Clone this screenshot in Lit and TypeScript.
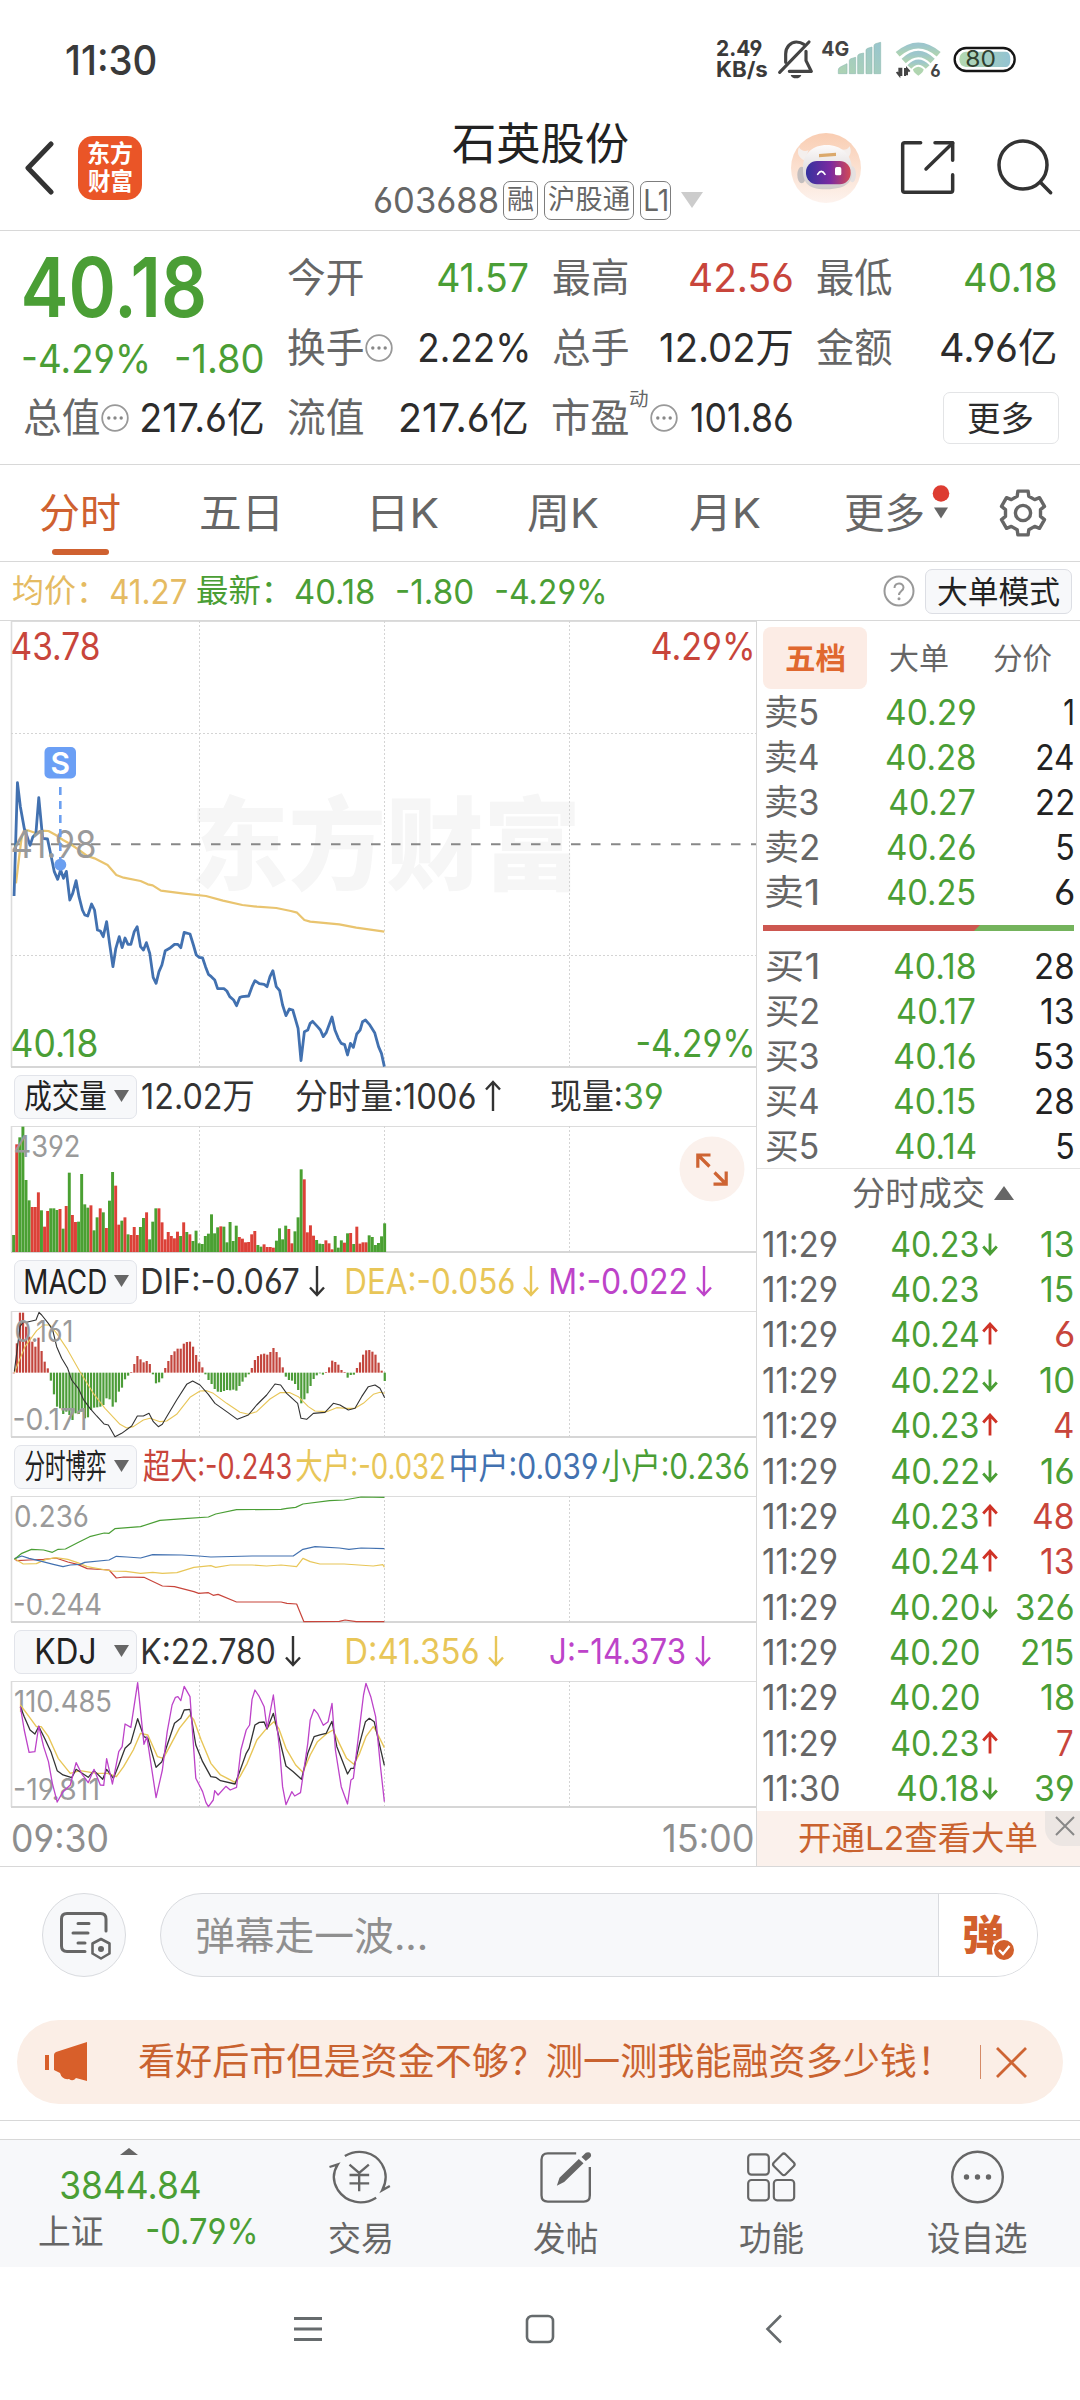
import { LitElement, html, svg, css, nothing } from "lit";
import { customElement, property } from "lit/decorators.js";

const FONT = css`Inter, "Noto Sans CJK SC", sans-serif`;
const GREEN = "#4a9e35";
const RED = "#c8453b";
const YELLOW = "#e8c658";
const BLUE = "#4271b0";
const PURPLE = "#bd43c9";

/** One line of text whose ink is stretched to exactly `w` pixels. */
@customElement("fit-text")
class FitText extends LitElement {
  @property() t = "";
  @property({ type: Number }) w = 10;
  @property({ type: Number }) size = 35;
  @property({ type: Number }) gap = 0;
  @property({ type: Number }) lh = 1.2;
  static styles = css`
    :host { display: block; flex: none; white-space: nowrap; }
    span { display: inline-block; transform-origin: 0 0; white-space: pre; }
  `;
  render() {
    return html`<span>${this.t}</span>`;
  }
  updated() {
    this.style.fontSize = this.size + "px";
    this.style.width = this.w + "px";
    this.style.lineHeight = this.style.height = Math.round(this.size * this.lh) + "px";
    if (this.gap) this.style.marginLeft = this.gap + "px";
    const cs = getComputedStyle(this);
    const ctx = document.createElement("canvas").getContext("2d")!;
    ctx.font = `${cs.fontWeight} ${this.size}px ${cs.fontFamily}`;
    const m = ctx.measureText(this.t);
    const span = this.renderRoot.querySelector("span")!;
    span.style.transform = "none";
    const real = span.getBoundingClientRect().width - m.width;
    const left = -m.actualBoundingBoxLeft;
    const k = this.w / (m.actualBoundingBoxRight - left + real);
    span.style.transform = `translateX(${-left * k}px) scaleX(${k})`;
  }
}

const T = (t: string, w: number, size: number, cls = "", gap = 0, lh = 1.2) =>
  html`<fit-text class=${cls} .t=${t} .w=${w} .size=${size} .gap=${gap} .lh=${lh}></fit-text>`;

const priceLine = "29,858 36,518 42,590 50,655 56,680 62,706 68,680 74,672 80,563 88,685 98,687 105,735 112,785 119,808 125,780 131,805 137,784 144,870 150,850 157,812 163,860 170,900 175,915 181,918 189,882 195,900 201,960 207,963 213,980 220,935 226,1000 233,1070 239,1015 246,980 252,1013 258,984 264,1003 270,1003 277,965 283,950 290,1010 296,1020 302,998 309,1030 316,1102 322,1120 328,1085 334,1065 341,1022 350,1015 360,1003 367,1003 373,1013 380,967 392,972 399,1005 405,1035 411,1042 418,1044 424,1070 430,1093 436,1100 443,1110 449,1136 462,1136 468,1143 474,1160 482,1170 488,1187 495,1162 500,1160 513,1158 520,1130 526,1112 535,1121 545,1123 551,1130 557,1100 563,1082 570,1130 577,1142 583,1185 590,1217 597,1197 604,1200 615,1255 621,1352 628,1265 635,1260 640,1240 645,1234 655,1250 661,1260 667,1280 673,1268 685,1221 691,1260 698,1285 704,1300 711,1304 717,1335 723,1300 729,1312 736,1272 743,1260 748,1235 754,1230 762,1243 773,1268 781,1310 787,1330 793,1370";
const avgLine = "33,820 40,735 45,680 50,660 60,662 75,670 85,662 100,663 115,675 130,690 145,702 165,722 180,738 195,745 222,765 240,795 255,803 290,813 305,823 315,826 332,842 380,851 425,858 460,872 500,885 530,890 570,894 600,903 613,908 628,930 640,935 700,943 735,953 793,965";
const volume = "g525 r253 g232 g200 g360 g421 r441 r441 r397 g451 r500 r453 g445 g445 g450 r447 g506 r438 g338 r465 r486 g485 g342 g433 g443 r436 g511 g472 r445 g457 r504 g422 g336 r377 r494 g482 r472 g523 r525 r501 r525 g501 g474 r457 g538 g485 g445 r445 r487 r538 r516 r528 r535 r515 g528 r487 g516 r523 g543 g512 g550 g552 g528 g521 g463 g520 g502 r499 g500 g547 g486 g543 g497 r531 r536 r547 r546 r523 r513 g555 g560 r553 r561 r561 r563 g542 g505 g538 g497 r507 r550 g514 g472 g328 r358 r517 r496 r527 g540 g551 g552 r541 r550 r568 g528 g563 g541 r548 g520 r519 g552 r500 r551 r547 r547 g526 g531 g555 g549 g529 g490".split(" ");
const hist = [938, 850, 758, 758, 800, 830, 845, 860, 833, 873, 905, 925, 962, 1003, 1040, 1045, 1062, 1055, 1065, 1080, 1060, 1062, 1055, 1075, 1072, 1050, 1043, 1042, 1040, 1035, 1015, 1018, 1040, 1027, 995, 983, 958, 947, 937, 912, 888, 898, 907, 903, 912, 943, 970, 967, 955, 924, 903, 885, 874, 866, 866, 851, 846, 845, 860, 885, 905, 922, 943, 960, 972, 987, 995, 996, 993, 990, 991, 989, 992, 978, 965, 952, 943, 924, 900, 888, 883, 881, 884, 876, 864, 876, 892, 922, 950, 960, 962, 972, 990, 1030, 1018, 1000, 978, 957, 946, 940, 944, 937, 922, 902, 906, 914, 930, 937, 953, 945, 944, 924, 907, 884, 871, 870, 875, 884, 908, 932, 963];
const dif = "43,935 50,880 60,800 70,785 80,787 108,780 117,757 125,765 145,790 158,810 170,860 185,895 203,925 215,960 235,985 250,1018 270,1045 290,1068 312,1092 325,1095 345,1130 365,1120 395,1098 412,1068 430,1068 447,1060 460,1085 475,1100 487,1093 500,1070 530,1020 560,973 578,963 600,975 625,1003 645,1030 680,1055 712,1078 745,1065 770,1035 800,1005 825,972 842,975 860,1000 893,1030 903,1075 920,1078 940,1060 975,1057 1000,1030 1020,1035 1045,1050 1065,1045 1085,1010 1105,980 1125,975 1140,985 1154,1013";
const dea = "43,938 75,860 110,812 130,795 150,795 170,820 200,865 240,935 280,1000 315,1045 360,1093 380,1104 400,1100 430,1080 450,1075 480,1085 500,1083 530,1063 570,1012 600,993 620,992 640,1000 680,1030 720,1057 745,1063 770,1055 810,1017 840,998 870,998 895,1010 925,1040 945,1053 980,1055 1010,1043 1040,1045 1065,1045 1090,1030 1120,1003 1140,997 1154,1000";
const flowSmall = "30,388 45,370 65,358 90,360 108,367 120,358 135,357 160,338 185,320 215,309 225,310 237,296 290,290 330,271 380,266 430,261 445,252 488,239 580,238 592,235 610,232 625,222 680,212 710,210 745,201 793,202";
const flowMid = "30,386 45,378 60,385 80,392 110,403 130,410 145,405 165,403 175,397 225,390 240,379 262,381 290,384 315,374 375,375 410,378 435,381 520,378 605,378 625,358 650,350 700,354 720,358 745,354 793,356";
const flowBig = "30,386 48,402 75,401 95,388 115,383 140,388 160,398 180,410 230,423 260,424 290,430 315,427 335,430 365,428 400,412 435,407 445,412 475,405 520,405 550,408 580,405 612,410 625,385 640,395 660,402 710,402 770,408 790,404 793,412";
const flowHuge = "30,386 35,392 60,390 90,388 115,384 140,396 160,403 180,416 225,420 240,444 255,441 297,442 335,468 360,470 400,485 410,490 430,488 440,496 450,493 488,516 580,516 592,520 612,522 627,575 700,574 712,570 735,575 793,575";
const kdjJ = "42,830 50,900 60,967 72,965 80,888 90,950 100,995 108,1060 118,1116 130,1085 145,1065 157,998 168,1030 182,1058 194,1018 207,1065 214,1066 220,986 232,1062 245,965 252,950 258,882 270,892 284,758 297,943 303,920 322,1103 335,1020 345,905 355,825 362,802 367,800 373,812 380,769 392,800 404,1045 418,1085 425,1118 430,1130 440,1110 443,1082 450,1095 466,1069 475,1080 488,1072 497,960 508,900 515,885 520,808 526,780 535,800 545,830 551,895 564,795 577,960 583,1070 590,1124 602,1085 608,1098 620,1088 635,940 640,870 648,838 655,850 667,886 677,875 685,820 692,960 704,1070 717,1122 724,1050 729,1045 742,890 750,795 755,760 765,800 775,860 785,1010 793,1115";
const kdjK = "42,830 50,860 62,900 72,912 80,890 92,925 105,965 118,1022 130,1035 148,1043 157,1018 182,1042 194,1022 212,1048 220,1018 234,1045 245,1005 258,955 270,938 284,866 297,920 305,925 322,1012 334,995 345,945 360,880 373,865 380,840 392,838 404,945 418,995 435,1040 445,1042 455,1052 485,1062 497,1015 508,970 514,955 526,885 535,877 545,876 551,897 564,850 577,930 590,1008 605,1025 622,1048 635,970 648,920 660,915 673,910 685,874 695,950 717,1032 724,1015 730,1015 742,940 754,875 762,865 772,875 780,925 793,1006";
const kdjD = "42,825 60,860 75,890 85,890 100,920 120,985 145,1030 165,1022 200,1030 212,1030 222,1030 240,1040 255,1010 275,960 290,910 305,915 325,980 337,985 350,950 370,895 392,855 400,870 415,930 435,1000 455,1035 485,1057 495,1040 510,1000 530,930 550,895 565,875 575,895 590,955 610,1005 625,1027 640,975 655,935 675,910 687,900 700,940 715,985 730,1003 742,970 755,920 770,890 775,900 793,953";

const poly = (points: string, color: string, width: number) =>
  svg`<polyline points=${points} fill="none" stroke=${color} stroke-width=${width} stroke-linejoin="round" vector-effect="non-scaling-stroke"/>`;

/** Text inside a chart: anchored edge, baseline, drawn width. */
const label = (t: string, x: number, y: number, w: number, size: number, color: string, anchor = "start") =>
  svg`<text x=${x} y=${y} text-anchor=${anchor} textLength=${w} lengthAdjust="spacingAndGlyphs" font-size=${size} fill=${color}>${t}</text>`;

const frame = (h: number) => svg`
  <path d="M11.5 0V${h - 1}" stroke="#dcdcdc" stroke-width="1.6"/>
  <path d="M11 .5H756" stroke="#dcdcdc"/>
  <path d="M11 ${h - 1}H756" stroke="#d6d6d6" stroke-width="1.8"/>
  <path d="M199.5 0V${h}M384.5 0V${h}M569.5 0V${h}" stroke="#d4d4d4" stroke-dasharray="2 2"/>`;

const arrow = (dir: "up" | "down", color: string, gap: number) => html`
  <svg class="arrow" width="16" height="32" viewBox="0 0 16 32" style="margin-left:${gap}px">
    <path transform=${dir === "up" ? "rotate(180 8 16)" : ""} d="M8 1V30M1 22.5L8 30L15 22.5" fill="none" stroke=${color} stroke-width="2.4"/>
  </svg>`;

const tickArrow = (dir: string) => html`
  <svg class="tick" width="16" height="24" viewBox="0 0 16 24">
    ${dir ? svg`<path transform=${dir === "u" ? "rotate(180 8 12)" : ""} d="M8 1.5V22M1.2 14.5L8 22L14.8 14.5" fill="none" stroke=${dir === "u" ? "#cf3226" : GREEN} stroke-width="2.8"/>` : nothing}
  </svg>`;

const dots = html`<svg class="dots" width="28" height="28" viewBox="0 0 28 28"><circle cx="14" cy="14" r="12.8" fill="none" stroke="#999" stroke-width="1.8"/><g fill="#888"><circle cx="7.8" cy="14" r="1.7"/><circle cx="14" cy="14" r="1.7"/><circle cx="20.2" cy="14" r="1.7"/></g></svg>`;

const gearPath = (() => {
  const p: string[] = [];
  const at = (deg: number, r: number) => {
    const a = (deg * Math.PI) / 180;
    return `${(25 + r * Math.cos(a)).toFixed(1)} ${(25 + r * Math.sin(a)).toFixed(1)}`;
  };
  for (let k = 0; k < 6; k++) {
    const a = 60 * k - 90;
    p.push(at(a - 13, 22.5), at(a + 13, 22.5), at(a + 19, 17.8), at(a + 41, 17.8));
  }
  return "M" + p.join("L") + "Z";
})();

const sells: [string, string, number, string, number][] = [
  ["卖5", "40.29", 88, "1", 9], ["卖4", "40.28", 88, "24", 36], ["卖3", "40.27", 85, "22", 36],
  ["卖2", "40.26", 87, "5", 16.5], ["卖1", "40.25", 87, "6", 17.5],
];
const buys: [string, string, number, string, number][] = [
  ["买1", "40.18", 80, "28", 37], ["买2", "40.17", 77, "13", 32], ["买3", "40.16", 80, "53", 38],
  ["买4", "40.15", 80, "28", 37], ["买5", "40.14", 79.5, "5", 16.5],
];
const trades: [string, string, number, string, string, number, string][] = [
  ["11:29", "40.23", 86, "d", "13", 32, "green"], ["11:29", "40.23", 86, "", "15", 32, "green"],
  ["11:29", "40.24", 86.5, "u", "6", 17.5, "red"], ["11:29", "40.22", 86, "d", "10", 33, "green"],
  ["11:29", "40.23", 86, "u", "4", 18, "red"], ["11:29", "40.22", 86, "d", "16", 32, "green"],
  ["11:29", "40.23", 86, "u", "48", 39, "red"], ["11:29", "40.24", 86.5, "u", "13", 32, "red"],
  ["11:29", "40.20", 87.5, "d", "326", 56, "green"], ["11:29", "40.20", 87.5, "", "215", 51, "green"],
  ["11:29", "40.20", 87.5, "", "18", 32.5, "green"], ["11:29", "40.23", 86, "u", "7", 16, "red"],
  ["11:30", "40.18", 80, "d", "39", 37, "green"],
];

@customElement("status-bar")
class StatusBar extends LitElement {
  static styles = css`
    :host { display: flex; height: 120px; box-sizing: border-box; padding: 0 60px 0 66px; align-items: center; color: #3a3a3a; font-weight: 500; }
    .net { margin-left: auto; margin-right: 9px; font-weight: 700; display: flex; flex-direction: column; margin-top: -3px; }
  `;
  render() {
    return html`
      ${T("11:30", 90, 41)}
      <div class="net">${T("2.49", 45, 22, "", 0, 0.95)}${T("KB/s", 50, 21, "", 0, 1)}</div>
      <svg width="244" height="60" viewBox="228 0 732 180">
        <defs>
          <linearGradient id="g" x1="0" y1="1" x2="1" y2="0"><stop offset="0" stop-color="#aed3b2"/><stop offset="1" stop-color="#98c5cf"/></linearGradient>
          <linearGradient id="w" x1="0" y1="1" x2="0" y2="0"><stop offset="0" stop-color="#aed3b2"/><stop offset="1" stop-color="#9dc6cc"/></linearGradient>
          <linearGradient id="b" x1="0" x2="1"><stop offset="0" stop-color="#b3d8b0"/><stop offset="1" stop-color="#93c3d2"/></linearGradient>
        </defs>
        <g fill="none" stroke="#444" stroke-width="9.5" stroke-linecap="round" stroke-linejoin="round">
          <path d="M239 127L327 36"/><path d="M257 97V72C257 51 272 36 289 36C299 36 306 39 311 43"/>
          <path d="M318 64V92L334 124H268"/>
        </g>
        <path d="M272 135H304C302 142 296 145 288 145C280 145 274 142 272 135Z" fill="#444"/>
        <text x="364" y="79" font-size="62" font-weight="700" fill="#444" textLength="84" lengthAdjust="spacingAndGlyphs">4G</text>
        <path fill="url(#g)" stroke="#93bcb4" stroke-width="2" d="M415 131V120Q415 114 421 111L441 101V131ZM448 131V92Q448 88 453 86L467 82V131ZM473 131V79Q473 74 478 72L491 69V131ZM498 131V61Q498 57 503 55L516 51V131ZM522 131V47Q522 43 527 41L542 37V131Z"/>
        <g fill="none" stroke="url(#w)">
          <path stroke-width="18" d="M593 73Q655 20 716 73"/><path stroke-width="18" d="M611 93Q655 51 698 93"/><path stroke-width="16" d="M628 111Q655 82 683 111"/>
        </g>
        <path d="M639 118Q655 103 671 118Q670 128 655 137Q640 128 639 118Z" fill="#b0d5b0"/>
        <path d="M604 113V138M598 113V136L590 126M615 138V114M621 136V116L629 125" fill="none" stroke="#444" stroke-width="6"/>
        <text x="691" y="141" font-size="52" font-weight="700" fill="#444" textLength="31" lengthAdjust="spacingAndGlyphs">6</text>
        <rect x="764" y="54" width="180" height="69" rx="34.5" fill="#fff" stroke="#151515" stroke-width="7"/>
        <path d="M797 65H918Q931 65 931 88Q931 111 918 111H797Q778 108 778 88Q778 68 797 65Z" fill="url(#b)"/>
        <text x="796" y="111" font-size="67" font-weight="400" fill="#30402f" textLength="92" lengthAdjust="spacingAndGlyphs">80</text>
      </svg>`;
  }
}

@customElement("stock-header")
class StockHeader extends LitElement {
  static styles = css`
    :host { display: grid; grid-template-columns: 1fr auto 1fr; height: 110px; border-bottom: 1px solid #d8d8d8; align-items: start; color: #222; }
    .side { display: flex; height: 95px; align-items: center; }
    .left { padding-left: 24px; gap: 24px; }
    .right { justify-content: flex-end; padding-right: 26px; gap: 38px; }
    .share { margin-right: 2px; margin-top: -2px; }
    .find { margin-top: -2px; }
    .logo { width: 64px; height: 64px; border-radius: 15px; background: #ea5527; color: #fff; font-weight: 700; display: flex; flex-direction: column; align-items: center; justify-content: center; }
    .mid { display: flex; flex-direction: column; align-items: center; }
    .title { height: 48px; display: flex; align-items: center; }
    .code { height: 64px; display: flex; align-items: center; color: #666; margin-left: -2px; }
    .tag { box-sizing: border-box; height: 39px; border: 1.5px solid #7d7d7d; border-radius: 7px; padding: 0 3.5px; display: flex; align-items: center; margin-left: 6px; }
    .down { margin-left: 10px; }
  `;
  render() {
    return html`
      <div class="side left">
        <svg width="30" height="54" viewBox="0 0 30 54"><path d="M27 3L4 27L27 51" fill="none" stroke="#333" stroke-width="5" stroke-linecap="round" stroke-linejoin="round"/></svg>
        <div class="logo">${T("东方", 44, 24, "", 0, 1.15)}${T("财富", 44, 24, "", 0, 1.15)}</div>
      </div>
      <div class="mid">
        <div class="title">${T("石英股份", 175, 44, "", 0, 1.1)}</div>
        <div class="code">
          ${T("603688", 122.5, 35)}
          <div class="tag">${T("融", 26, 27)}</div><div class="tag">${T("沪股通", 81, 27)}</div><div class="tag">${T("L1", 22, 30)}</div>
          <svg class="down" width="22" height="16" viewBox="0 0 22 16"><path d="M0 0H22L11 16Z" fill="#ccc"/></svg>
        </div>
      </div>
      <div class="side right">
        <svg width="72" height="72" viewBox="270 303 216 216">
          <defs>
            <linearGradient id="bg" x1="0" y1="0" x2="0" y2="1"><stop offset="0" stop-color="#f9cdb2"/><stop offset="1" stop-color="#fdf3ee"/></linearGradient>
            <linearGradient id="v" x1="0" x2="1"><stop offset="0" stop-color="#35329f"/><stop offset=".55" stop-color="#7b2aa0"/><stop offset="1" stop-color="#d34a55"/></linearGradient>
            <linearGradient id="h" x1="0" y1="0" x2="0" y2="1"><stop offset="0" stop-color="#fdfbfb"/><stop offset="1" stop-color="#cfcaca"/></linearGradient>
          </defs>
          <circle cx="378" cy="411" r="105" fill="url(#bg)"/>
          <ellipse cx="305" cy="432" rx="13" ry="25" fill="#c3bebe"/><ellipse cx="457" cy="430" rx="11" ry="24" fill="#e5e0e0"/>
          <path d="M313 388C294 380 290 365 297 349C304 360 314 362 326 358ZM435 386C452 376 456 363 449 346C442 357 434 358 420 355Z" fill="#f4efed"/>
          <path d="M309 410C309 368 338 342 380 342C424 342 453 370 456 410C460 452 444 473 378 475C318 474 308 450 309 410Z" fill="url(#h)"/>
          <path d="M357 369L408 365V375L357 379Z" fill="#dba96c"/>
          <rect x="318" y="390" width="134" height="70" rx="33" fill="url(#v)"/>
          <path d="M353 430Q364 412 375 430" fill="none" stroke="#fff" stroke-width="5" stroke-linecap="round"/>
          <rect x="405" y="408" width="19" height="25" rx="5" fill="#fff"/>
        </svg>
        <svg class="share" width="56" height="56" viewBox="598 325 168 168"><g fill="none" stroke="#333" stroke-width="10.5" stroke-linecap="round" stroke-linejoin="round"><path d="M660 336H612Q606 336 606 342V478Q606 485 612 485H750Q756 485 756 478V432"/><path d="M703 336H756V389"/><path d="M756 337L676 415"/></g></svg>
        <svg class="find" width="58" height="58" viewBox="886 322 174 174"><g fill="none" stroke="#333" stroke-width="10.5" stroke-linecap="round"><circle cx="967" cy="403" r="72"/><path d="M1019 455L1050 486"/></g></svg>
      </div>`;
  }
}

@customElement("quote-panel")
class QuotePanel extends LitElement {
  static styles = css`
    :host { display: grid; grid-template-columns: repeat(4, 239px); grid-template-rows: repeat(3, 70px); justify-content: space-between; height: 221px; padding: 12px 24px 0; border-bottom: 1px solid #d8d8d8; color: #666; }
    .main { grid-row: span 2; display: flex; flex-direction: column; color: #4a9e35; }
    .price { font-weight: 600; height: 90px; display: flex; align-items: center; }
    .chg { height: 50px; display: flex; align-items: center; justify-content: space-between; margin-left: -1px; }
    .cell { display: flex; align-items: center; }
    .cell > :last-child { margin-left: auto; }
    .dots { margin-left: 2px; }
    .sup { align-self: flex-start; margin-top: 5px; }
    .green { color: #4a9e35; } .red { color: #c8453b; } .dark { color: #2c2c2c; }
    .btn { box-sizing: border-box; width: 116px; height: 52px; border: 1.5px solid #e3e4e6; border-radius: 7px; display: flex; align-items: center; justify-content: center; color: #2c2c2c; margin-right: -3px; }
  `;
  cell(name: string, value: string, w: number, cls: string, extra: unknown = nothing) {
    return html`<div class="cell">${T(name, 75, 39.5)}${extra}${T(value, w, 40, cls)}</div>`;
  }
  render() {
    return html`
      <div class="main">
        <div class="price">${T("40.18", 180, 82, "", 0, 1.1)}</div>
        <div class="chg">${T("-4.29%", 124, 39)}${T("-1.80", 87, 39)}</div>
      </div>
      ${this.cell("今开", "41.57", 89.5, "green")}
      ${this.cell("最高", "42.56", 102, "red")}
      ${this.cell("最低", "40.18", 91, "green")}
      ${this.cell("换手", "2.22%", 107.5, "dark", dots)}
      ${this.cell("总手", "12.02万", 132, "dark")}
      ${this.cell("金额", "4.96亿", 114.5, "dark")}
      ${this.cell("总值", "217.6亿", 121, "dark", dots)}
      ${this.cell("流值", "217.6亿", 126, "dark")}
      ${this.cell("市盈", "101.86", 101, "dark", html`${T("动", 17.5, 19, "sup", 2.5)}${dots}`)}
      <div class="cell"><div class="btn">${T("更多", 65, 34)}</div></div>`;
  }
}

@customElement("period-tabs")
class PeriodTabs extends LitElement {
  static styles = css`
    :host { display: flex; height: 96px; border-bottom: 1px solid #d8d8d8; padding: 0 32px 0 40px; align-items: center; color: #666; }
    .on { position: relative; height: 96px; display: flex; align-items: center; color: #cf6130; }
    .on::after { content: ""; position: absolute; left: 12px; bottom: 6px; width: 57px; height: 6px; border-radius: 3px; background: #cf6130; }
    .badge { margin-left: 9px; }
    .gear { margin-left: auto; }
  `;
  render() {
    return html`
      <div class="on">${T("分时", 80, 41)}</div>
      ${T("五日", 77, 41, "", 80.5)}
      ${T("日K", 65.5, 41, "", 95)}
      ${T("周K", 70.5, 41, "", 90)}
      ${T("月K", 70.5, 41, "", 91)}
      ${T("更多", 78, 41, "", 84.5)}
      <svg class="badge" width="18" height="56" viewBox="0 0 18 56"><circle cx="9" cy="8.5" r="8.3" fill="#dd3c31"/><path d="M2 22.5H16L9 33.5Z" fill="#666"/></svg>
      <svg class="gear" width="50" height="50" viewBox="0 0 50 50"><g fill="none" stroke="#666" stroke-width="3.4" stroke-linejoin="round"><path d=${gearPath}/><circle cx="25" cy="25" r="7.6"/></g></svg>`;
  }
}

@customElement("price-summary")
class PriceSummary extends LitElement {
  static styles = css`
    :host { display: flex; height: 58px; border-bottom: 1px solid #d8d8d8; align-items: center; padding: 0 8px 0 13px; color: #4a9e35; }
    .avg { color: #e5bb62; }
    .help { margin-left: auto; margin-right: 10px; }
    .mode { box-sizing: border-box; width: 147px; height: 45px; border: 1px solid #dcdee4; border-radius: 7px; background: #f7f8fa; display: flex; align-items: center; justify-content: center; color: #222; }
  `;
  render() {
    return html`
      ${T("均价：", 74, 32, "avg")}${T("41.27", 75, 34.5, "avg", 24)}
      ${T("最新：", 75, 32, "", 11)}${T("40.18", 78, 34.5, "", 24)}${T("-1.80", 75.5, 34.5, "", 23)}${T("-4.29%", 108, 34.5, "", 23)}
      <svg class="help" width="32" height="32" viewBox="0 0 32 32"><circle cx="16" cy="16" r="14.5" fill="none" stroke="#999" stroke-width="2"/><path d="M11.5 13C11.5 7 20.5 7 20.5 12.5C20.5 16 16 16 16 20" fill="none" stroke="#999" stroke-width="2"/><circle cx="16" cy="23.8" r="1.5" fill="#999"/></svg>
      <div class="mode">${T("大单模式", 121, 31)}</div>`;
  }
}

@customElement("chart-column")
class ChartColumn extends LitElement {
  static styles = css`
    :host { display: block; width: 756px; border-right: 1px solid #d8d8d8; color: #333; }
    svg { display: block; }
    .head { display: flex; height: 58px; align-items: center; padding-left: 14px; }
    .head > fit-text, .arrow { position: relative; top: -1px; }
    .pill { box-sizing: border-box; width: 123px; height: 44px; border: 1px solid #e2e4ea; border-radius: 7px; background: #f7f8fa; display: flex; align-items: center; padding: 0 7px 2px 10px; color: #222; margin-right: 5px; flex: none; }
    .pill svg { margin-left: auto; }
    .kdj { padding-left: 22px; }
    .green { color: #4a9e35; } .red { color: #c8453b; } .yellow { color: #e8c658; } .blue { color: #4271b0; } .purple { color: #bd43c9; }
    .vol { position: relative; }
    .expand { position: absolute; left: 679px; top: 10px; }
    .axis { display: flex; justify-content: space-between; align-items: center; height: 61px; padding: 0 3px 0 13px; color: #8e8e8e; }
  `;
  pill(name: string, w: number, size: number, cls = "") {
    return html`<div class="pill ${cls}">${T(name, w, size)}<svg width="15" height="12" viewBox="0 0 15 12"><path d="M0 0H15L7.5 12Z" fill="#666"/></svg></div>`;
  }
  render() {
    const GRAY = "#9a9a9a";
    return html`
      <svg width="756" height="447" viewBox="0 0 756 447">
        <text x="191" y="261" font-size="101" font-weight="900" fill="#f6f6f6" textLength="390" lengthAdjust="spacingAndGlyphs">东方财富</text>
        ${frame(447)}
        <path d="M11 112.5H756M11 334.5H756" stroke="#d4d4d4" stroke-dasharray="2 2"/>
        <path d="M11 223.3H756" stroke="#888" stroke-width="2" stroke-dasharray="9.5 10.5"/>
        <g transform="translate(0,-11) scale(.48469,.33333)">${poly(avgLine, "#e9c46f", 2.2)}${poly(priceLine, BLUE, 2.8)}</g>
        ${label("43.78", 10.5, 39, 90, 37.5, RED)}${label("4.29%", 755.5, 39, 105, 37.5, RED, "end")}
        ${label("40.18", 10.5, 436, 88, 37.5, GREEN)}${label("-4.29%", 755.5, 436, 120, 37.5, GREEN, "end")}
        ${label("41.98", 10.5, 237, 86, 37.5, GRAY)}
        <path d="M60.3 166V240" stroke="#6b9ff0" stroke-width="2.6" stroke-dasharray="8 6"/>
        <circle cx="60.3" cy="243.8" r="6" fill="#6b9ff0"/>
        <rect x="44.5" y="126" width="31.5" height="31.5" rx="5" fill="#6b9ff5"/>
        <text x="60.2" y="152.500" text-anchor="middle" font-size="30" font-weight="600" fill="#fff">S</text>
      </svg>

      <div class="head">${this.pill("成交量", 81, 33)}${T("12.02万", 111, 35)}${T("分时量:1006", 179, 35, "", 43)}${arrow("up", "#333", 9.5)}
        ${T("现量:", 70, 35, "", 50)}${T("39", 37, 35, "green", 4)}</div>
      <div class="vol">
        <svg width="756" height="127" viewBox="0 0 756 127">
          ${frame(127)}
          ${volume.map((v, i) => {
            const y = +v.slice(1) / 3 - 66;
            return svg`<rect x=${(36.5 + 9.275 * i) / 3} y=${y} width="2.95" height=${126 - y} fill=${v[0] === "g" ? "#4aa032" : "#dc4138"}/>`;
          })}
          ${label("4392", 13.5, 30.5, 67, 29.5, GRAY)}
        </svg>
        <svg class="expand" width="66" height="66" viewBox="0 0 66 66"><circle cx="33" cy="33" r="32.5" fill="#fbf1ec"/><g fill="none" stroke="#ce6433" stroke-width="3.2"><path d="M31.5 19H18.8V31.8M19 19L30.5 30.5"/><path d="M34.5 48.2H47.2V35.4M47 48L35.5 36.5"/></g></svg>
      </div>

      <div class="head">${this.pill("MACD", 81, 34)}${T("DIF:-0.067", 156, 35, "", 1)}${arrow("down", "#333", 10)}
        ${T("DEA:-0.056", 167, 35, "yellow", 22)}${arrow("down", YELLOW, 9)}
        ${T("M:-0.022", 135, 35, "purple", 12)}${arrow("down", PURPLE, 10)}</div>
      <svg width="756" height="127" viewBox="0 0 756 127">
        ${frame(127)}
        <g transform="translate(0,-251) scale(.33333)">
          ${hist.map((y, i) => svg`<rect x=${38 + 9.275 * i} y=${Math.min(y, 938)} width="6.6" height=${Math.max(2, Math.abs(y - 938))} fill=${y > 938 ? "#4c9c38" : "#c3453d"}/>`)}
          ${poly(dea, YELLOW, 1.1)}${poly(dif, "#333", 1.1)}
        </g>
        ${label("0.161", 14.5, 30.5, 59, 29.5, GRAY)}${label("-0.171", 12.5, 118.5, 75, 29.5, GRAY)}
      </svg>

      <div class="head">${this.pill("分时博弈", 81, 33)}${T("超大:-0.243", 148, 35, "red", 0.5)}${T("大户:-0.032", 148, 35, "yellow", 5.5)}
        ${T("中户:0.039", 146, 35, "blue", 7)}${T("小户:0.236", 146.5, 35, "green", 5)}</div>
      <svg width="756" height="127" viewBox="0 0 756 127">
        ${frame(127)}
        <g transform="translate(0,-66) scale(.48469,.33333)">${poly(flowHuge, RED, 1.2)}${poly(flowBig, YELLOW, 1.2)}${poly(flowMid, BLUE, 1.2)}${poly(flowSmall, GREEN, 1.2)}</g>
        ${label("0.236", 14, 30.5, 75, 29.5, GRAY)}${label("-0.244", 13, 118.5, 89, 29.5, GRAY)}
      </svg>

      <div class="head">${this.pill("KDJ", 57, 35, "kdj")}${T("K:22.780", 131, 35, "", 1)}${arrow("down", "#333", 11)}
        ${T("D:41.356", 131, 35, "yellow", 46)}${arrow("down", YELLOW, 10)}
        ${T("J:-14.373", 134.5, 35, "purple", 46)}${arrow("down", PURPLE, 10.5)}</div>
      <svg width="756" height="127" viewBox="0 0 756 127">
        ${frame(127)}
        ${label("110.485", 14, 30.5, 98, 29.5, GRAY)}${label("-19.811", 13, 118.5, 87, 29.5, GRAY)}
        <g transform="translate(0,-251) scale(.48469,.33333)">${poly(kdjD, YELLOW, 1.4)}${poly(kdjK, "#333", 1.3)}${poly(kdjJ, PURPLE, 1.3)}</g>
      </svg>
      <div class="axis">${T("09:30", 94.5, 37.5)}${T("15:00", 90, 37.5)}</div>`;
  }
}

@customElement("order-column")
class OrderColumn extends LitElement {
  static styles = css`
    :host { display: flex; flex-direction: column; flex: 1; height: 1245px; color: #666; }
    .tabs { display: flex; height: 62px; padding: 6px 6px 0; }
    .tab { width: 104px; height: 62px; display: flex; align-items: center; justify-content: center; }
    .on { background: #fcece5; border-radius: 8px; color: #e0682f; font-weight: 700; }
    .row { display: flex; height: 45px; align-items: center; padding: 0 8px 0 9px; }
    .row .p { width: 157px; display: flex; justify-content: flex-end; }
    .row > :last-child { margin-left: auto; }
    .trade { height: 45.38px; padding: 0 8px 0 6px; }
    .trade .p { width: auto; margin-left: auto; }
    .trade .tick { margin-left: 4px; flex: none; }
    .trade > .q { width: 75px; display: flex; justify-content: flex-end; margin-left: 0; }
    .green { color: #4a9e35; } .red { color: #c8453b; } .dark { color: #222; }
    .ratio { display: block; margin: 11px 6px 12px; flex: none; }
    .title { border-top: 1px solid #e4e4e4; box-sizing: border-box; height: 53px; padding: 0 0 4px 96px; display: flex; align-items: center; gap: 9px; }
    .l2 { position: relative; flex: 1; background: #fbf1ec; color: #c9622f; display: flex; align-items: center; padding-left: 42px; }
    .close { position: absolute; right: 0; top: 0; width: 36px; height: 35px; border-bottom-left-radius: 18px; background: #ece6e3; display: flex; align-items: center; justify-content: center; }
    .close svg { margin: -4px -3px 0 0; }
  `;
  book(rows: typeof sells) {
    return rows.map(([n, p, pw, q, qw]) => html`<div class="row">${T(n, 52, 35)}<div class="p">${T(p, pw, 35, "green")}</div>${T(q, qw, 35, "dark")}</div>`);
  }
  render() {
    return html`
      <div class="tabs"><div class="tab on">${T("五档", 59, 30)}</div><div class="tab">${T("大单", 58, 30)}</div><div class="tab">${T("分价", 58, 30)}</div></div>
      ${this.book(sells)}
      <svg class="ratio" width="311" height="6" viewBox="0 0 311 6"><path d="M0 0H311V6H0Z" fill="#74b35c"/><path d="M0 0H217L211 6H0Z" fill="#cd5750"/></svg>
      ${this.book(buys)}
      <div class="title">${T("分时成交", 131.5, 33.5)}<svg width="20" height="14" viewBox="0 0 20 14"><path d="M0 14H20L10 0Z" fill="#666"/></svg></div>
      ${trades.map(([t, p, pw, d, q, qw, c]) => html`<div class="row trade">${T(t, t === "11:30" ? 75.5 : 73.5, 35)}<div class="p">${T(p, pw, 35, "green")}</div>${tickArrow(d)}<div class="q">${T(q, qw, 35, c)}</div></div>`)}
      <div class="l2">${T("开通L2查看大单", 238, 33)}
        <div class="close"><svg width="20" height="20" viewBox="0 0 20 20"><path d="M1 1L19 19M19 1L1 19" stroke="#888" stroke-width="2"/></svg></div>
      </div>`;
  }
}

@customElement("comment-bar")
class CommentBar extends LitElement {
  static styles = css`
    :host { display: block; box-sizing: border-box; height: 254px; padding-top: 26px; border-bottom: 1px solid #d8d8d8; }
    .row { display: flex; height: 84px; padding: 0 42px; justify-content: space-between; }
    .set, .input { box-sizing: border-box; background: #f7f8fa; border: 1.5px solid #d9dbdf; border-radius: 42px; display: flex; align-items: center; }
    .set { width: 84px; justify-content: center; }
    .set svg { margin-left: 3px; margin-top: 2px; }
    .input { width: 878px; color: #8f8f8f; padding-left: 36px; overflow: hidden; }
    .send { margin-left: auto; width: 99px; height: 84px; background: #fff; border-left: 1.5px solid #d9dbdf; display: flex; align-items: center; padding-left: 25px; box-sizing: border-box; position: relative; color: #d2602c; font-weight: 900; }
    .ok { position: absolute; left: 53px; top: 45px; }
    .promo { display: flex; align-items: center; box-sizing: border-box; height: 84px; margin: 43px 17px 0; border-radius: 42px; background: #fbeee6; color: #c9622f; padding: 0 36px 0 28px; }
    .line { width: 1.5px; height: 34px; background: #d58a66; margin-left: auto; margin-right: 15px; }
  `;
  render() {
    return html`
      <div class="row">
        <div class="set"><svg width="54" height="50" viewBox="0 0 54 50"><g fill="none" stroke="#666" stroke-width="3" stroke-linecap="round" stroke-linejoin="round"><path d="M47 20V8Q47 2.5 41.5 2.5H8Q2.5 2.5 2.5 8V35Q2.5 40.5 8 40.5H26"/><path d="M19 12.5H30M14 22H29M19 32H26"/><path stroke-width="2.6" d="M42 28L50.5 32.5V42.5L42 47.5L33.5 42.5V32.5Z"/></g><circle cx="42" cy="38" r="3" fill="#666"/></svg></div>
        <div class="input">${T("弹幕走一波...", 229, 39)}
          <div class="send">${T("弹", 39, 41)}<svg class="ok" width="24" height="24" viewBox="0 0 24 24"><circle cx="12" cy="12" r="11" fill="#d2602c" stroke="#fff" stroke-width="2"/><path d="M7 12L11 16L17.5 8" fill="none" stroke="#fff" stroke-width="2.4"/></svg></div>
        </div>
      </div>
      <div class="promo">
        <svg width="43" height="40" viewBox="0 0 43 40"><g fill="#d85f2a"><rect x="0" y="13" width="4" height="15"/><path d="M9 13Q9 11 11 10L42 0V39L31 36Q28 40 24 37Q17 38 15 31L9 28Z"/></g></svg>
        ${T("看好后市但是资金不够？测一测我能融资多少钱！", 790, 37, "", 51)}
        <div class="line"></div>
        <svg width="31" height="31" viewBox="0 0 31 31"><path d="M1 1L30 30M30 1L1 30" stroke="#ce6433" stroke-width="2.8"/></svg>
      </div>`;
  }
}

@customElement("bottom-nav")
class BottomNav extends LitElement {
  static styles = css`
    :host { display: grid; grid-template-columns: 257px repeat(4, 205.75px); height: 127px; background: #f7f8fa; border-top: 1px solid #d8d8d8; margin-top: 18px; color: #666; }
    .item { display: flex; flex-direction: column; align-items: center; padding-top: 7px; }
    .item svg { display: block; margin-bottom: 11px; }
    .index { display: flex; flex-direction: column; align-items: center; color: #4a9e35; padding-top: 8px; }
    .index svg { display: block; flex: none; }
    .val { margin: 7px 0 2px 3px; }
    .pair { display: flex; align-items: center; padding-left: 37px; align-self: flex-start; }
    .gray { color: #666; }
  `;
  render() {
    return html`
      <div class="index">
        <svg width="18" height="7" viewBox="0 0 18 7"><path d="M0 7H18L9 0Z" fill="#666"/></svg>
        <div class="val">${T("3844.84", 139, 38.5)}</div>
        <div class="pair">${T("上证", 64, 34.5, "gray", 2)}${T("-0.79%", 108.5, 36, "", 44)}</div>
      </div>
      <div class="item">
        <svg width="65" height="60" viewBox="54.5 20 195 180"><g fill="none" stroke="#666" stroke-width="7"><path d="M108 47C150 22 198 37 219 71C234 96 233 125 220 150L243 137"/><path d="M202 172C160 198 112 186 87 149C71 123 71 97 87 72L62 80"/><path d="M122 73L151 98L180 73M122 104H181M122 129H181M151 98V153"/></g></svg>
        ${T("交易", 62, 34)}
      </div>
      <div class="item">
        <svg width="65" height="60" viewBox="670.5 20 195 180"><path d="M800 39H715Q696 39 696 58V165Q696 184 715 184H823Q841 184 841 165V80" fill="none" stroke="#666" stroke-width="7"/><path d="M742 136L750 112L808 56L822 69L764 125ZM816 50L829 37Q839 33 844 40Q847 46 841 52L829 62Z" fill="#666"/></svg>
        ${T("发帖", 63.5, 34)}
      </div>
      <div class="item">
        <svg width="65" height="60" viewBox="1286.5 20 195 180"><g fill="none" stroke="#666" stroke-width="6.5"><rect x="1314" y="42" width="62" height="61" rx="10"/><rect x="1314" y="119" width="62" height="61" rx="10"/><rect x="1391" y="119" width="61" height="61" rx="10"/><rect x="1396" y="47" width="50" height="50" rx="8" transform="rotate(45 1421 72)"/></g></svg>
        ${T("功能", 63, 34)}
      </div>
      <div class="item">
        <svg width="65" height="60" viewBox="0 0 65 60"><circle cx="32.5" cy="30" r="25.3" fill="none" stroke="#666" stroke-width="2.4"/><g fill="#666"><circle cx="21.5" cy="30" r="2.7"/><circle cx="32.5" cy="30" r="2.7"/><circle cx="43.5" cy="30" r="2.7"/></g></svg>
        ${T("设自选", 98.5, 34)}
      </div>`;
  }
}

@customElement("app-root")
class AppRoot extends LitElement {
  static styles = css`
    :host { display: block; width: 1080px; height: 2400px; overflow: hidden; background: #fff; font-family: ${FONT}; font-weight: 400; font-feature-settings: "cv03", "cv04", "case"; }
    .main { display: flex; height: 1245px; border-bottom: 1px solid #d8d8d8; }
    .keys { display: flex; height: 133px; padding: 0 294px; justify-content: space-between; align-items: flex-start; }
    .keys svg { margin-top: 47px; }
  `;
  render() {
    return html`
      <status-bar></status-bar>
      <stock-header></stock-header>
      <quote-panel></quote-panel>
      <period-tabs></period-tabs>
      <price-summary></price-summary>
      <div class="main"><chart-column></chart-column><order-column></order-column></div>
      <comment-bar></comment-bar>
      <bottom-nav></bottom-nav>
      <div class="keys">
        <svg width="28" height="30" viewBox="0 0 28 30"><path d="M0 4.5H28M0 15H28M0 25.5H28" stroke="#666b6d" stroke-width="3"/></svg>
        <svg width="30" height="30" viewBox="0 0 30 30"><rect x="2" y="2" width="26" height="26" rx="5" fill="none" stroke="#666b6d" stroke-width="2.6"/></svg>
        <svg width="28" height="30" viewBox="0 0 28 30"><path d="M23 1.5L9.5 15L23 28.5" fill="none" stroke="#666b6d" stroke-width="2.6"/></svg>
      </div>`;
  }
}
